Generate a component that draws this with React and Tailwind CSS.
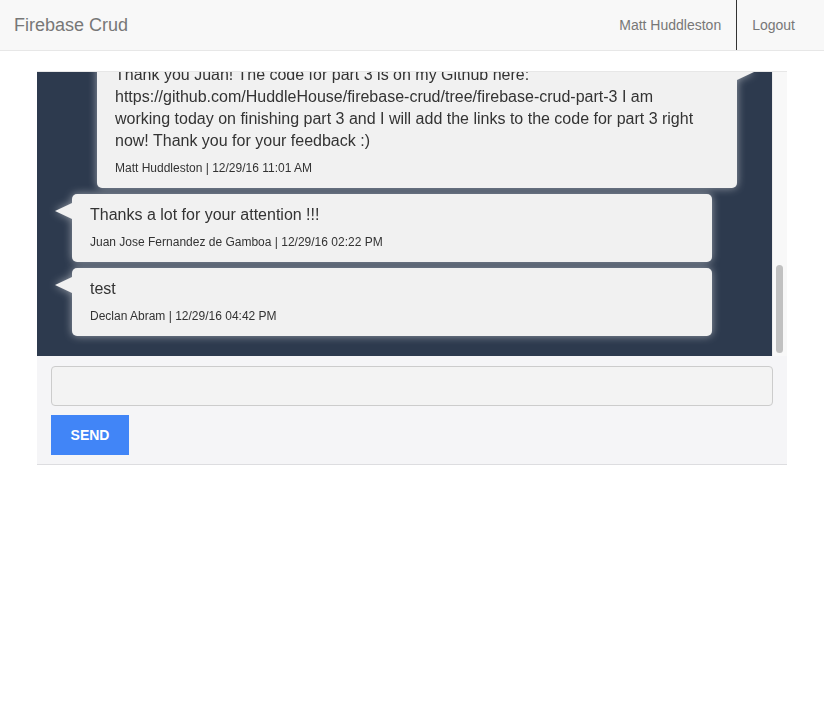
import React from "react";

const messages = [
  {
    side: "right",
    lines: [
      "Thank you Juan! The code for part 3 is on my Github here:",
      "https://github.com/HuddleHouse/firebase-crud/tree/firebase-crud-part-3 I am",
      "working today on finishing part 3 and I will add the links to the code for part 3 right",
      "now! Thank you for your feedback :)",
    ],
    name: "Matt Huddleston",
    date: "12/29/16 11:01 AM",
  },
  {
    side: "left",
    lines: ["Thanks a lot for your attention !!!"],
    name: "Juan Jose Fernandez de Gamboa",
    date: "12/29/16 02:22 PM",
  },
  {
    side: "left",
    lines: ["test"],
    name: "Declan Abram",
    date: "12/29/16 04:42 PM",
  },
];

function Bubble({ msg }) {
  const isRight = msg.side === "right";
  return (
    <div
      className={
        "relative w-[640px] drop-shadow-[0_0_4px_rgba(255,255,255,0.5)] " +
        (isRight ? "ml-[60px]" : "ml-[35px]")
      }
    >
      {isRight ? (
        <div className="absolute right-[-17px] top-[10px] h-0 w-0 border-y-[8px] border-l-[17px] border-y-transparent border-l-[#f1f1f1]" />
      ) : (
        <div className="absolute left-[-17px] top-[9px] h-0 w-0 border-y-[8px] border-r-[17px] border-y-transparent border-r-[#f1f1f1]" />
      )}
      <div className="rounded-[5px] bg-[#f1f1f1] px-[18px] pt-[10px] pb-[11px] text-[#333]">
        <div className="text-[16px] leading-[22px]">
          {msg.lines.map((l, i) => (
            <div key={i} className="whitespace-nowrap">
              {l}
            </div>
          ))}
        </div>
        <div className="mt-[8px] text-[12px] leading-[17px]">
          {msg.name} | {msg.date}
        </div>
      </div>
    </div>
  );
}

export default function App() {
  return (
    <div className="min-h-[703px] bg-white font-['Liberation_Sans',Arial,sans-serif]">
      <div className="flex h-[51px] items-center justify-between border-b border-[#e7e7e7] bg-[#f8f8f8]">
        <div className="pl-[14px] text-[18px] text-[#777]">Firebase Crud</div>
        <div className="flex h-full items-center pr-[14px] text-[14px] text-[#777]">
          <div className="flex h-full items-center border-r border-[#333] px-[15px]">
            Matt Huddleston
          </div>
          <div className="flex h-full items-center px-[15px]">Logout</div>
        </div>
      </div>

      <div className="mx-[37px] mt-[20px] w-[750px] border-t border-[#e7e7e7]">
        <div className="flex h-[284px]">
          <div className="flex w-[735px] flex-col justify-end gap-[6px] overflow-hidden bg-[#2d3a4e] pb-[20px]">
            {messages.map((m, i) => (
              <div key={i} className="shrink-0">
                <Bubble msg={m} />
              </div>
            ))}
          </div>
          <div className="flex w-[15px] flex-col border-l border-[#ececec] bg-[#f8f8f8] pl-[3px] pr-[4px] pt-[193px] pb-[3px]">
            <div className="flex-1 rounded-full bg-[#c1c1c1]" />
          </div>
        </div>
        <div className="border-b border-[#dddde0] bg-[#f5f5f7] px-[14px] pt-[10px] pb-[9px]">
          <input
            className="block h-[40px] w-full rounded-[4px] border border-[#cccccc] bg-[#f3f3f3] px-3 outline-none"
            type="text"
          />
          <button className="mt-[9px] flex h-[40px] w-[78px] items-center justify-center bg-[#4185f7] text-[14px] font-bold text-white">
            SEND
          </button>
        </div>
      </div>
    </div>
  );
}
